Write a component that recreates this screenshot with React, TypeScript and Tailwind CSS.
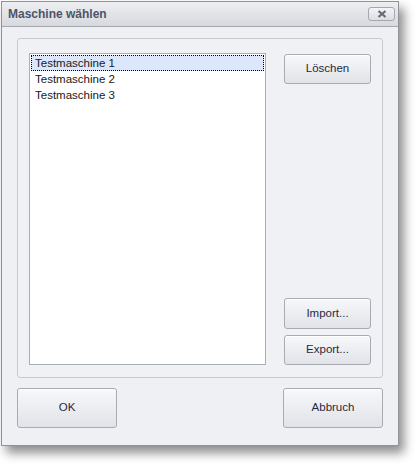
import React from 'react';

const btn =
  'flex items-center justify-center rounded-[3px] border border-[#a7abb4] bg-gradient-to-b from-[#f7f8fa] to-[#e1e3e8] text-[11.5px] text-[#1f2a44] shadow-[inset_0_1px_0_#ffffff]';

export default function App() {
  const items = ['Testmaschine 1', 'Testmaschine 2', 'Testmaschine 3'];

  return (
    <div
      className="w-[417px] h-[464px] bg-white pl-[1px] pt-[1px]"
      style={{ fontFamily: '"Liberation Sans", Arial, sans-serif' }}
    >
      {/* Window */}
      <div className="w-[398px] h-[445px] flex flex-col border border-[#8f929a] bg-[#eef0f4] shadow-[5px_7px_10px_rgba(0,0,0,0.45)]">
        {/* Title bar */}
        <div className="h-[25px] flex items-center justify-between pl-[6px] pr-[3px] border-b border-[#a3a6ad] bg-gradient-to-b from-[#eceef2] to-[#d7d9de]">
          <span className="text-[12px] font-bold text-[#4d5465]">Maschine wählen</span>
          <div className="w-[27px] h-[14px] flex items-center justify-center rounded-[3px] border border-[#a4a7ae] bg-gradient-to-b from-[#f3f4f6] to-[#dcdee3]">
            <svg width="10" height="8" viewBox="0 0 10 8">
              <path d="M1.5 1 L8.5 7 M8.5 1 L1.5 7" stroke="#666a73" strokeWidth="2.2" />
            </svg>
          </div>
        </div>

        {/* Client */}
        <div className="flex-1 flex flex-col px-[15px] pt-[11px]">
          {/* Group box */}
          <div className="h-[340px] flex gap-[18px] rounded-[3px] border border-[#c6c9d0] bg-[#f0f1f5] pl-[11px] pr-[11px] pt-[14px] pb-[12px]">
            {/* List */}
            <div className="w-[237px] h-[312px] border border-[#a9adb5] bg-white pt-[1px] px-[1px] text-[11.5px] text-[#1a1a1a]">
              {items.map((it, i) => (
                <div
                  key={it}
                  className={`h-[16px] leading-[14px] pl-[3px] ${
                    i === 0 ? 'bg-[#dce7fb] border border-dotted border-black' : 'border border-transparent'
                  }`}
                >
                  {it}
                </div>
              ))}
            </div>

            {/* Side buttons */}
            <div className="flex-1 flex flex-col pt-[1px]">
              <div className={`${btn} h-[30px]`}>Löschen</div>
              <div className="flex-1" />
              <div className={`${btn} h-[31px]`}>Import...</div>
              <div className={`${btn} h-[30px] mt-[6px]`}>Export...</div>
            </div>
          </div>

          {/* Bottom buttons */}
          <div className="flex justify-between mt-[10px]">
            <div className={`${btn} w-[100px] h-[40px]`}>OK</div>
            <div className={`${btn} w-[100px] h-[40px]`}>Abbruch</div>
          </div>
        </div>
      </div>
    </div>
  );
}
